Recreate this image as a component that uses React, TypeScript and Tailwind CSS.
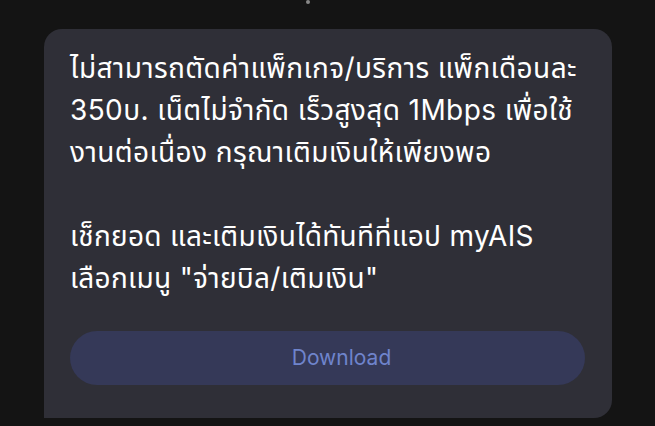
export default function App() {
  return (
    <div className="w-[655px] h-[426px] bg-[#141414] overflow-hidden relative" style={{ fontFamily: 'Inter, "Noto Sans Thai", "Noto Sans", "Liberation Sans", sans-serif' }}>
      <div className="absolute left-[306px] top-0 w-[4px] h-[4px] rounded-full bg-[#888]" />
      <div className="pt-[29px] pl-[44px]">
        <div className="w-[568px] h-[389px] bg-[#2f2f37] rounded-[18px] rounded-bl-none px-[26px] pt-[18px]">
          <p className="text-[28px] leading-[42px] text-white whitespace-nowrap tracking-[0.4px]">
            ไม่สามารถตัดค่าแพ็กเกจ/บริการ แพ็กเดือนละ<br />350บ. เน็ตไม่จำกัด เร็วสูงสุด 1Mbps เพื่อใช้<br />งานต่อเนื่อง กรุณาเติมเงินให้เพียงพอ
          </p>
          <p className="text-[28px] leading-[42px] text-white mt-[42px] whitespace-nowrap tracking-[0.3px]">
            เช็กยอด และเติมเงินได้ทันทีที่แอป myAIS<br />เลือกเมนู "จ่ายบิล/เติมเงิน"
          </p>
          <button className="mt-[32px] w-[515px] h-[54px] rounded-full bg-[#353958] text-[#6f84cc] text-[21px] pl-[28px]">
            Download
          </button>
        </div>
      </div>
    </div>
  );
}
